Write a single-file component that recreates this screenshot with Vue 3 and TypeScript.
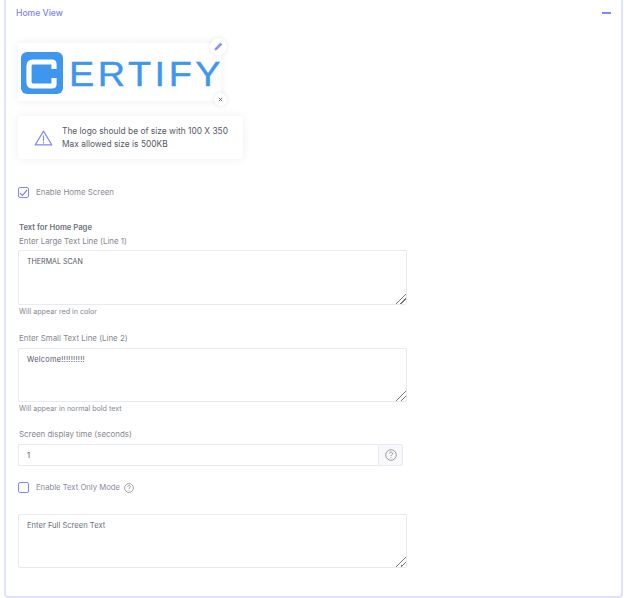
<script setup lang="ts">
const hint = 'Will appear'
</script>

<template>
  <div class="page">
    <section class="card">
      <header class="head">
        <span class="title">Home View</span>
        <span class="minus"></span>
      </header>

      <div class="logo">
        <svg class="mark" width="42" height="42" viewBox="0 0 42 42" fill="none">
          <rect width="42" height="42" rx="6" fill="#3d97ef"/>
          <path d="M33 17V12Q33 10 31 10H12Q8 10 8 14V30Q8 34 12 34H31Q33 34 33 32V26" stroke="#fff" stroke-width="5.2"/>
        </svg>
        <span class="word">ERTIFY</span>
        <button class="edit" aria-label="edit">
          <svg width="9" height="9" viewBox="0 0 12 12"><path d="M8.6.8l2.6 2.6-7.4 7.4-3 .5.4-3.1z" fill="#8f93f7"/></svg>
        </button>
        <button class="close" aria-label="remove">
          <svg width="5" height="5" viewBox="0 0 6 6"><path d="M1 1l4 4M5 1L1 5" stroke="#666" stroke-width="1.1"/></svg>
        </button>
      </div>

      <div class="notice">
        <svg class="warn" width="19" height="16" viewBox="0 0 20 17" fill="none" stroke="#8288f7" stroke-width="1.2" stroke-linejoin="round">
          <path d="M10 1.2L1.2 15.8h17.6z"/>
          <path d="M10 6.2v5M10 12.8v1" stroke-linecap="round"/>
        </svg>
        <div class="notice-text">
          <div>The logo should be of size with 100 X 350</div>
          <div>Max allowed size is 500KB</div>
        </div>
      </div>

      <label class="check first">
        <span class="box">
          <svg width="9" height="8" viewBox="0 0 9 8" fill="none"><path d="M1 4.2l2.4 2.3L8 1.2" stroke="#6f76f2" stroke-width="1.1"/></svg>
        </span>
        <span class="check-text">Enable Home Screen</span>
      </label>

      <div class="section-title">Text for Home Page</div>
      <div class="label">Enter Large Text Line (Line 1)</div>
      <textarea class="area caps" readonly>THERMAL SCAN</textarea>
      <div class="hint">{{ hint }} red in color</div>

      <div class="label second">Enter Small Text Line (Line 2)</div>
      <textarea class="area small welcome" readonly>Welcome!!!!!!!!!!</textarea>
      <div class="hint">{{ hint }} in normal bold text</div>

      <div class="label third">Screen display time (seconds)</div>
      <div class="group">
        <input class="input" value="1" readonly />
        <span class="addon">
          <svg width="12" height="12" viewBox="0 0 12 12" fill="none" stroke="#777" stroke-width=".7"><circle cx="6" cy="6" r="5.3"/><path d="M4.4 4.6c0-2 3.2-2 3.2-.1 0 1.2-1.6 1.2-1.6 2.6M6 8.2v.9"/></svg>
        </span>
      </div>

      <label class="check text-mode">
        <span class="box"></span>
        <span class="mode-text">Enable Text Only Mode</span>
        <svg class="mode-help" width="10" height="10" viewBox="0 0 12 12" fill="none" stroke="#777" stroke-width=".8"><circle cx="6" cy="6" r="5.3"/><path d="M4.4 4.6c0-2 3.2-2 3.2-.1 0 1.2-1.6 1.2-1.6 2.6M6 8.2v.9"/></svg>
      </label>

      <textarea class="area small full" readonly placeholder="Enter Full Screen Text"></textarea>
    </section>
  </div>
</template>

<style>
html, body { margin: 0; background: #fff; }
</style>

<style scoped>
.page {
  width: 624px;
  height: 598px;
  overflow: hidden;
  font-family: "Inter", "Open Sans", sans-serif;
  color: #555a66;
}
.card {
  box-sizing: border-box;
  width: 619px;
  height: 598px;
  margin-left: 4px;
  padding: 6px 0 0 12px;
  border: 2px solid #e0e3fd;
  border-top: 0;
  border-radius: 0 0 4px 4px;
}
.head {
  display: flex;
  align-items: center;
  justify-content: space-between;
  height: 13px;
  padding-right: 10px;
  margin-left: -2px;
}
.title { font-size: 8.6px; font-weight: 500; color: #7d83f6; }
.minus { width: 9px; height: 2px; background: #7b8cff; }
.logo {
  position: relative;
  box-sizing: border-box;
  display: flex;
  align-items: center;
  width: 203px;
  height: 58px;
  margin-top: 24px;
  padding-left: 3px;
  background: #fff;
  box-shadow: 0 0 8px rgba(40, 50, 110, .08);
}
.mark { flex: none; margin-top: 1px; }
.word {
  margin: 2px 0 0 6px;
  font-family: "Liberation Sans", sans-serif;
  font-size: 35px;
  line-height: 1;
  letter-spacing: 3.3px;
  color: #3d97ef;
  -webkit-text-stroke: .4px #3d97ef;
  transform: scaleX(1.08);
  transform-origin: left center;
}
.edit, .close {
  position: absolute;
  display: flex;
  align-items: center;
  justify-content: center;
  padding: 0;
  border: 0;
  border-radius: 50%;
  background: #fff;
  box-shadow: 0 0 4px rgba(40, 50, 110, .12);
}
.edit { right: -6px; top: -5px; width: 17px; height: 17px; }
.close { right: -6px; bottom: -4.5px; width: 13px; height: 13px; }
.notice {
  display: flex;
  align-items: center;
  box-sizing: border-box;
  width: 225px;
  height: 43px;
  margin-top: 15px;
  padding-left: 16px;
  background: #fff;
  border-radius: 3px;
  box-shadow: 0 0 8px rgba(40, 50, 110, .08);
}
.warn { flex: none; margin-right: 9px; }
.notice-text { font-size: 8.4px; line-height: 12.5px; color: #555a66; }
.check {
  display: flex;
  align-items: center;
  gap: 7px;
  height: 11px;
  font-size: 7.9px;
  color: #888c96;
}
.check-text { padding-bottom: 2px; }
.check.first { margin-top: 28px; }
.box {
  box-sizing: border-box;
  display: flex;
  align-items: center;
  justify-content: center;
  width: 11px;
  height: 11px;
  border: 1.5px solid #838af7;
  border-radius: 2px;
  flex: none;
}
.section-title {
  margin-top: 24px;
  padding-left: 1px;
  font-size: 7.7px;
  line-height: 12px;
  font-weight: 600;
  color: #6d717b;
}
.label {
  margin-top: 1px;
  padding-left: 1px;
  font-size: 7.9px;
  line-height: 12px;
  color: #84888f;
}
.second { margin-top: 15px; }
.third { margin-top: 14px; line-height: 13px; }
.area {
  display: block;
  box-sizing: border-box;
  width: 389px;
  height: 55px;
  margin: 3px 0 0;
  padding: 5px 8px;
  border: 1px solid #e8e9f1;
  border-radius: 2px;
  outline: 0;
  font: 7.6px/11px "Inter", sans-serif;
  color: #555a66;
  background: #fff;
}
.area::-webkit-resizer {
  background-image: linear-gradient(135deg, transparent 46%, #777 46%, #777 54%, transparent 54%, transparent 70%, #777 70%, #777 78%, transparent 78%);
  background-size: 10px 10px;
  background-position: right bottom;
  background-repeat: no-repeat;
}
.area::placeholder { color: #6d717b; opacity: 1; }
.area.caps { font-size: 7.1px; }
.area.welcome { font-size: 7.4px; letter-spacing: .25px; margin-top: 4px; }
.area.small { height: 54px; }
.area.full { margin-top: 21px; }
.hint {
  margin-top: 1px;
  padding-left: 1px;
  font-size: 7.15px;
  line-height: 11px;
  color: #84888f;
}
.group { display: flex; width: 385px; height: 22px; margin-top: 3px; }
.input {
  box-sizing: border-box;
  width: 360px;
  height: 22px;
  padding: 0 8px;
  border: 1px solid #e8e9f1;
  border-right: 0;
  border-radius: 2px 0 0 2px;
  outline: 0;
  font: 7.6px "Inter", sans-serif;
  color: #555a66;
}
.addon {
  box-sizing: border-box;
  display: flex;
  align-items: center;
  justify-content: center;
  width: 25px;
  height: 22px;
  background: #f8f8fb;
  border: 1px solid #e8e9f1;
  border-radius: 0 2px 2px 0;
}
.text-mode { margin-top: 16px; }
.mode-text { font-size: 7.7px; }
.mode-help { margin-left: -3px; }
</style>
